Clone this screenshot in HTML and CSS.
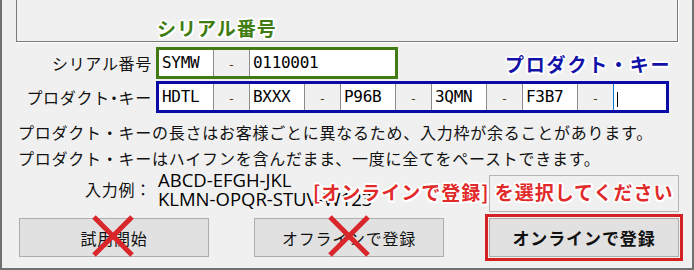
FILE: index.html
```html
<!DOCTYPE html>
<html lang="ja">
<head>
<meta charset="utf-8">
<title>ライセンス登録</title>
<link rel="stylesheet" href="styles.css">
</head>
<body>
<div class="frame">
  <div class="panel"></div>

  <div class="keys">
    <div class="key-label">シリアル番号</div>
    <div class="keybox keybox-serial">
      <div class="cell">SYMW</div><div class="sep">-</div><div class="cell cell-fill">0110001</div>
    </div>
    <div class="key-label">プロダクト<span class="mid-dot">・</span>キー</div>
    <div class="keybox keybox-product">
      <div class="cell">HDTL</div><div class="sep">-</div><div class="cell">BXXX</div><div class="sep">-</div><div class="cell">P96B</div><div class="sep">-</div><div class="cell">3QMN</div><div class="sep">-</div><div class="cell">F3B7</div><div class="sep">-</div><div class="cell cell-fill cell-focus"><span class="caret"></span></div>
    </div>
  </div>

  <div class="notes">
    <p>プロダクト・キーの長さはお客様ごとに異なるため、入力枠が余ることがあります。</p>
    <p>プロダクト・キーはハイフンを含んだまま、一度に全てをペーストできます。</p>
  </div>

  <div class="example">
    <div class="example-label">入力例：</div>
    <div class="example-text">ABCD-EFGH-JKL<br>KLMN-OPQR-STUV-W123</div>
    <div class="example-box"></div>
  </div>

  <div class="buttons">
    <button class="btn">試用開始</button>
    <button class="btn">オフラインで登録</button>
    <button class="btn btn-primary">オンラインで登録</button>
  </div>

  <div class="note note-serial">シリアル番号</div>
  <div class="note note-product">プロダクト・キー</div>
  <div class="note note-online">[オンラインで登録] を選択してください</div>

  <svg class="cross cross-1" viewBox="0 0 44 44"><path d="M3 3 L41 41 M41 3 L3 41" stroke="#d9262a" stroke-width="5" fill="none"/></svg>
  <svg class="cross cross-2" viewBox="0 0 44 44"><path d="M3 3 L41 41 M41 3 L3 41" stroke="#d9262a" stroke-width="5" fill="none"/></svg>
</div>
</body>
</html>
```
FILE: styles.css
```css
body {
  margin: 0;
  background: #f0f0f0;
  font-family: "Noto Sans CJK JP", sans-serif;
  color: #111;
}

.frame {
  position: relative;
  width: 694px;
  height: 270px;
  box-sizing: border-box;
  border: 2px solid #707070;
  border-top: none;
  padding-right: 13px;
  background: #f0f0f0;
}

.panel {
  margin-left: 14px;
  width: 662px;
  height: 42px;
  box-sizing: border-box;
  border: 1px solid #7a7a7a;
  border-top: none;
  box-shadow: 1px 1px 0 #fff;
}

.keys {
  display: grid;
  grid-template-columns: 150px max-content;
  column-gap: 4px;
  row-gap: 2px;
  margin-top: 5px;
  align-items: center;
}

.key-label {
  text-align: right;
  font-size: 16px;
  letter-spacing: 0.7px;
  line-height: 20px;
  white-space: nowrap;
}

.mid-dot {
  font-feature-settings: "palt";
  letter-spacing: 0.7px;
}

.keybox {
  display: flex;
  height: 32px;
  box-sizing: border-box;
  border: 3px solid;
  background: #fff;
}

.keybox-serial {
  width: 242px;
  border-color: #427b13;
}

.keybox-product {
  width: 513px;
  border-color: #0a0aa6;
}

.cell {
  flex: none;
  width: 54px;
  box-sizing: border-box;
  padding-left: 3px;
  background: #fff;
  font-family: "DejaVu Sans Mono", monospace;
  font-size: 16px;
  letter-spacing: -0.3px;
  line-height: 26px;
  color: #000;
}

.sep + .cell {
  width: 55px;
  border-left: 1px solid #8c8c8c;
}

.sep + .cell-fill,
.cell-fill {
  flex: 1 1 auto;
  width: auto;
}

.cell-focus {
  border-left-color: #0078d7 !important;
}

.caret {
  display: inline-block;
  width: 1px;
  height: 15px;
  margin-left: 0;
  background: #000;
  vertical-align: -5px;
}

.sep {
  flex: none;
  width: 36px;
  box-sizing: border-box;
  border-left: 1px solid #8c8c8c;
  background: #f0f0f0;
  text-align: center;
  font-family: "DejaVu Sans", sans-serif;
  font-size: 12px;
  line-height: 30px;
  color: #4a3a20;
}

.notes {
  margin-top: 6px;
  padding-left: 16px;
  font-size: 16px;
  letter-spacing: 0.75px;
  line-height: 26px;
  white-space: nowrap;
}

.notes p {
  margin: 0;
}

.example {
  display: flex;
  align-items: flex-start;
  margin-top: -1px;
}

.example-label {
  flex: none;
  width: 73px;
  margin-left: 83px;
  font-size: 16px;
  letter-spacing: 0.7px;
  line-height: 38px;
}

.example-text {
  font-family: "Open Sans", sans-serif;
  font-size: 18.5px;
  line-height: 19px;
  white-space: nowrap;
  color: #000;
}

.example-box {
  flex: none;
  width: 190px;
  height: 37px;
  margin-left: auto;
  margin-top: 5px;
  box-sizing: border-box;
  border: 1px solid #b4b4b4;
  background: #f0f0f0;
}

.buttons {
  display: flex;
  gap: 45px;
  margin-top: 6px;
  padding-left: 17px;
}

.btn {
  display: flex;
  align-items: center;
  justify-content: center;
  width: 190px;
  height: 39px;
  padding: 0;
  box-sizing: border-box;
  border: 1px solid #adadad;
  background: #e1e1e1;
  font-family: "Noto Sans CJK JP", sans-serif;
  font-size: 16px;
  letter-spacing: 0.75px;
  color: #111;
}

.btn-primary {
  font-weight: 700;
  font-size: 17px;
  letter-spacing: 0.9px;
  outline: 3px solid #d52121;
  outline-offset: 1px;
}

.note {
  position: absolute;
  font-weight: 700;
  font-size: 19px;
  letter-spacing: 1px;
  line-height: 24px;
  white-space: nowrap;
  text-shadow:
    2px 0 0 #fff, -2px 0 0 #fff, 0 2px 0 #fff, 0 -2px 0 #fff,
    1.5px 1.5px 0 #fff, -1.5px -1.5px 0 #fff, 1.5px -1.5px 0 #fff, -1.5px 1.5px 0 #fff,
    0 0 3px #fff;
}

.note-serial {
  left: 155px;
  top: 16px;
  color: #3f7d12;
}

.note-product {
  left: 503px;
  top: 52px;
  letter-spacing: 1.8px;
  color: #1212a8;
}

.note-online {
  left: 311px;
  top: 180px;
  color: #e12a2a;
}

.cross {
  position: absolute;
  width: 44px;
  height: 44px;
}

.cross-1 {
  left: 89px;
  top: 214px;
}

.cross-2 {
  left: 325px;
  top: 214px;
}
```
